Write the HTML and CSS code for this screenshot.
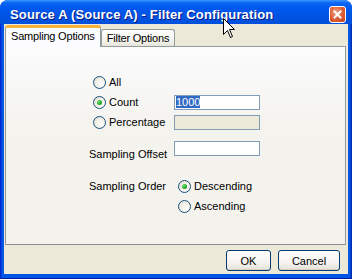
FILE: index.html
```html
<!DOCTYPE html>
<html lang="en">
<head>
    <meta charset="UTF-8">
    <title>Source A (Source A) - Filter Configuration</title>
    <link rel="stylesheet" href="styles.css">
</head>
<body>
    <div class="window">
        <!-- Title bar -->
        <div class="titlebar">
            <span class="title">Source A (Source A) - Filter Configuration</span>
            <span class="close-btn">
                <svg width="15" height="15" viewBox="0 0 15 15">
                    <path d="M4.5 4.5 L10.5 10.5 M10.5 4.5 L4.5 10.5" stroke="#fff" stroke-width="2" stroke-linecap="square"/>
                </svg>
            </span>
        </div>

        <div class="client">
            <!-- Tabs -->
            <div class="tabs">
                <div class="tab active">Sampling Options</div>
                <div class="tab">Filter Options</div>
            </div>

            <!-- Tab panel -->
            <div class="panel">
                <div class="form">
                    <label class="radio indent"><span class="circle"></span>All</label>
                    <span></span>

                    <label class="radio indent"><span class="circle checked"></span>Count</label>
                    <div class="field"><span class="selected">1000</span></div>

                    <label class="radio indent"><span class="circle"></span>Percentage</label>
                    <div class="field disabled"></div>

                    <span class="label">Sampling Offset</span>
                    <div class="field"></div>

                    <span class="label">Sampling Order</span>
                    <label class="radio indent"><span class="circle checked"></span>Descending</label>

                    <span></span>
                    <label class="radio indent"><span class="circle"></span>Ascending</label>
                </div>
            </div>

            <!-- Buttons -->
            <div class="footer">
                <button class="btn ok">OK</button>
                <button class="btn cancel">Cancel</button>
            </div>
        </div>

        <!-- Mouse pointer over the title -->
        <svg class="cursor" width="13" height="21" viewBox="0 0 13 21">
            <path d="M0.5 0.5 L0.5 16.5 L4.5 12.5 L7.5 19.5 L9.5 18.5 L6.5 11.5 L11.5 11.5 Z" fill="#fff" stroke="#000" stroke-width="1"/>
        </svg>
    </div>
</body>
</html>
```

FILE: styles.css
```css
body {
    margin: 0;
    background-color: #fff;
    font-family: "Liberation Sans", Arial, sans-serif;
    font-size: 11px;
    color: #000;
}

/* Window frame */
.window {
    position: relative;
    width: 352px;
    height: 279px;
    box-sizing: border-box;
    display: flex;
    flex-direction: column;
    background: linear-gradient(to right, #0019cf, #0055e5 2px, #0055e5 calc(100% - 2px), #001ea0);
    border-radius: 8px 8px 0 0;
    border-bottom: 1px solid #001ea0;
}

.titlebar {
    height: 24px;
    box-sizing: border-box;
    padding: 5px 6px 0 10px;
    display: flex;
    align-items: center;
    justify-content: space-between;
    border-radius: 8px 8px 0 0;
    background: linear-gradient(#3d95ff 0, #0a66f5 3px, #0058ee 8px, #0054e3 16px, #0050db 100%);
}

.title {
    color: #fff;
    font-weight: bold;
    font-size: 13px;
    letter-spacing: 0.15px;
    text-shadow: 1px 1px 0 #0a1883;
    white-space: nowrap;
}

.close-btn {
    width: 15px;
    height: 15px;
    border: 1px solid #fff;
    border-radius: 3px;
    background: radial-gradient(circle at 40% 35%, #f0a486 0, #e0623c 45%, #c4401c 100%);
    display: flex;
}

/* Client area */
.client {
    flex: 1;
    margin: 0 4px 4px 4px;
    background-color: #ece9d8;
    display: flex;
    flex-direction: column;
}

.tabs {
    display: flex;
    align-items: flex-end;
    margin: 1px 0 0 1px;
    height: 21px;
}

.tab {
    height: 16px;
    padding: 0 5px;
    line-height: 16px;
    letter-spacing: -0.2px;
    white-space: nowrap;
    border: 1px solid #919b9c;
    border-bottom: none;
    border-radius: 3px 3px 0 0;
    background: linear-gradient(#fff, #f3f2ec 70%, #e6e4d8);
}

.tab.active {
    position: relative;
    z-index: 1;
    height: 19px;
    line-height: 17px;
    padding: 0 5px;
    margin-bottom: -1px;
    border-top: 3px solid #f8b33b;
    background: #fcfcfe;
}

.panel {
    height: 199px;
    box-sizing: border-box;
    margin: 0 2px 0 1px;
    border: 1px solid #919b9c;
    border-bottom-color: #8c9294;
    background: linear-gradient(#fcfcfe, #f4f3ee 40%, #f3f2ec);
}

/* Form grid */
.form {
    display: grid;
    grid-template-columns: 85px 86px;
    grid-template-rows: 20px 20px 20px 32px 32px 20px;
    align-items: end;
    padding: 25px 0 0 83px;
}

.form > * {
    height: 20px;
    display: flex;
    align-items: center;
}

.radio {
    gap: 3px;
    white-space: nowrap;
}

.radio.indent {
    margin-left: 4px;
}

.circle {
    position: relative;
    width: 11px;
    height: 11px;
    border: 1px solid #1c5180;
    border-radius: 50%;
    background: radial-gradient(circle at 65% 65%, #fff 0, #f1efe6 50%, #d6d3c6 100%);
}

.circle.checked::after {
    content: '';
    position: absolute;
    left: 3px;
    top: 3px;
    width: 5px;
    height: 5px;
    border-radius: 50%;
    background: radial-gradient(circle at 35% 35%, #6ee46e, #21a121 60%, #1a8a1a);
}

.field {
    height: 15px;
    box-sizing: border-box;
    align-self: center;
    border: 1px solid #7f9db9;
    background-color: #fff;
    padding-left: 1px;
}

.field.disabled {
    background-color: #ece9d8;
}

.selected {
    background-color: #316ac5;
    color: #fff;
    line-height: 12px;
}

/* Buttons */
.footer {
    flex: 1;
    display: flex;
    justify-content: flex-end;
    align-items: flex-start;
    gap: 7px;
    padding: 5px 8px 0 0;
}

.btn {
    height: 21px;
    padding: 0;
    font-family: "Liberation Sans", Arial, sans-serif;
    font-size: 11px;
    color: #000;
    border: 1px solid #003c74;
    border-radius: 3px;
    background: linear-gradient(#fff, #f5f4f0 60%, #e3e1d6);
    box-shadow: inset 0 -1px 0 #d6d0c5;
}

.btn.ok {
    width: 45px;
}

.btn.cancel {
    width: 62px;
}

.cursor {
    position: absolute;
    left: 223px;
    top: 18px;
}
```
